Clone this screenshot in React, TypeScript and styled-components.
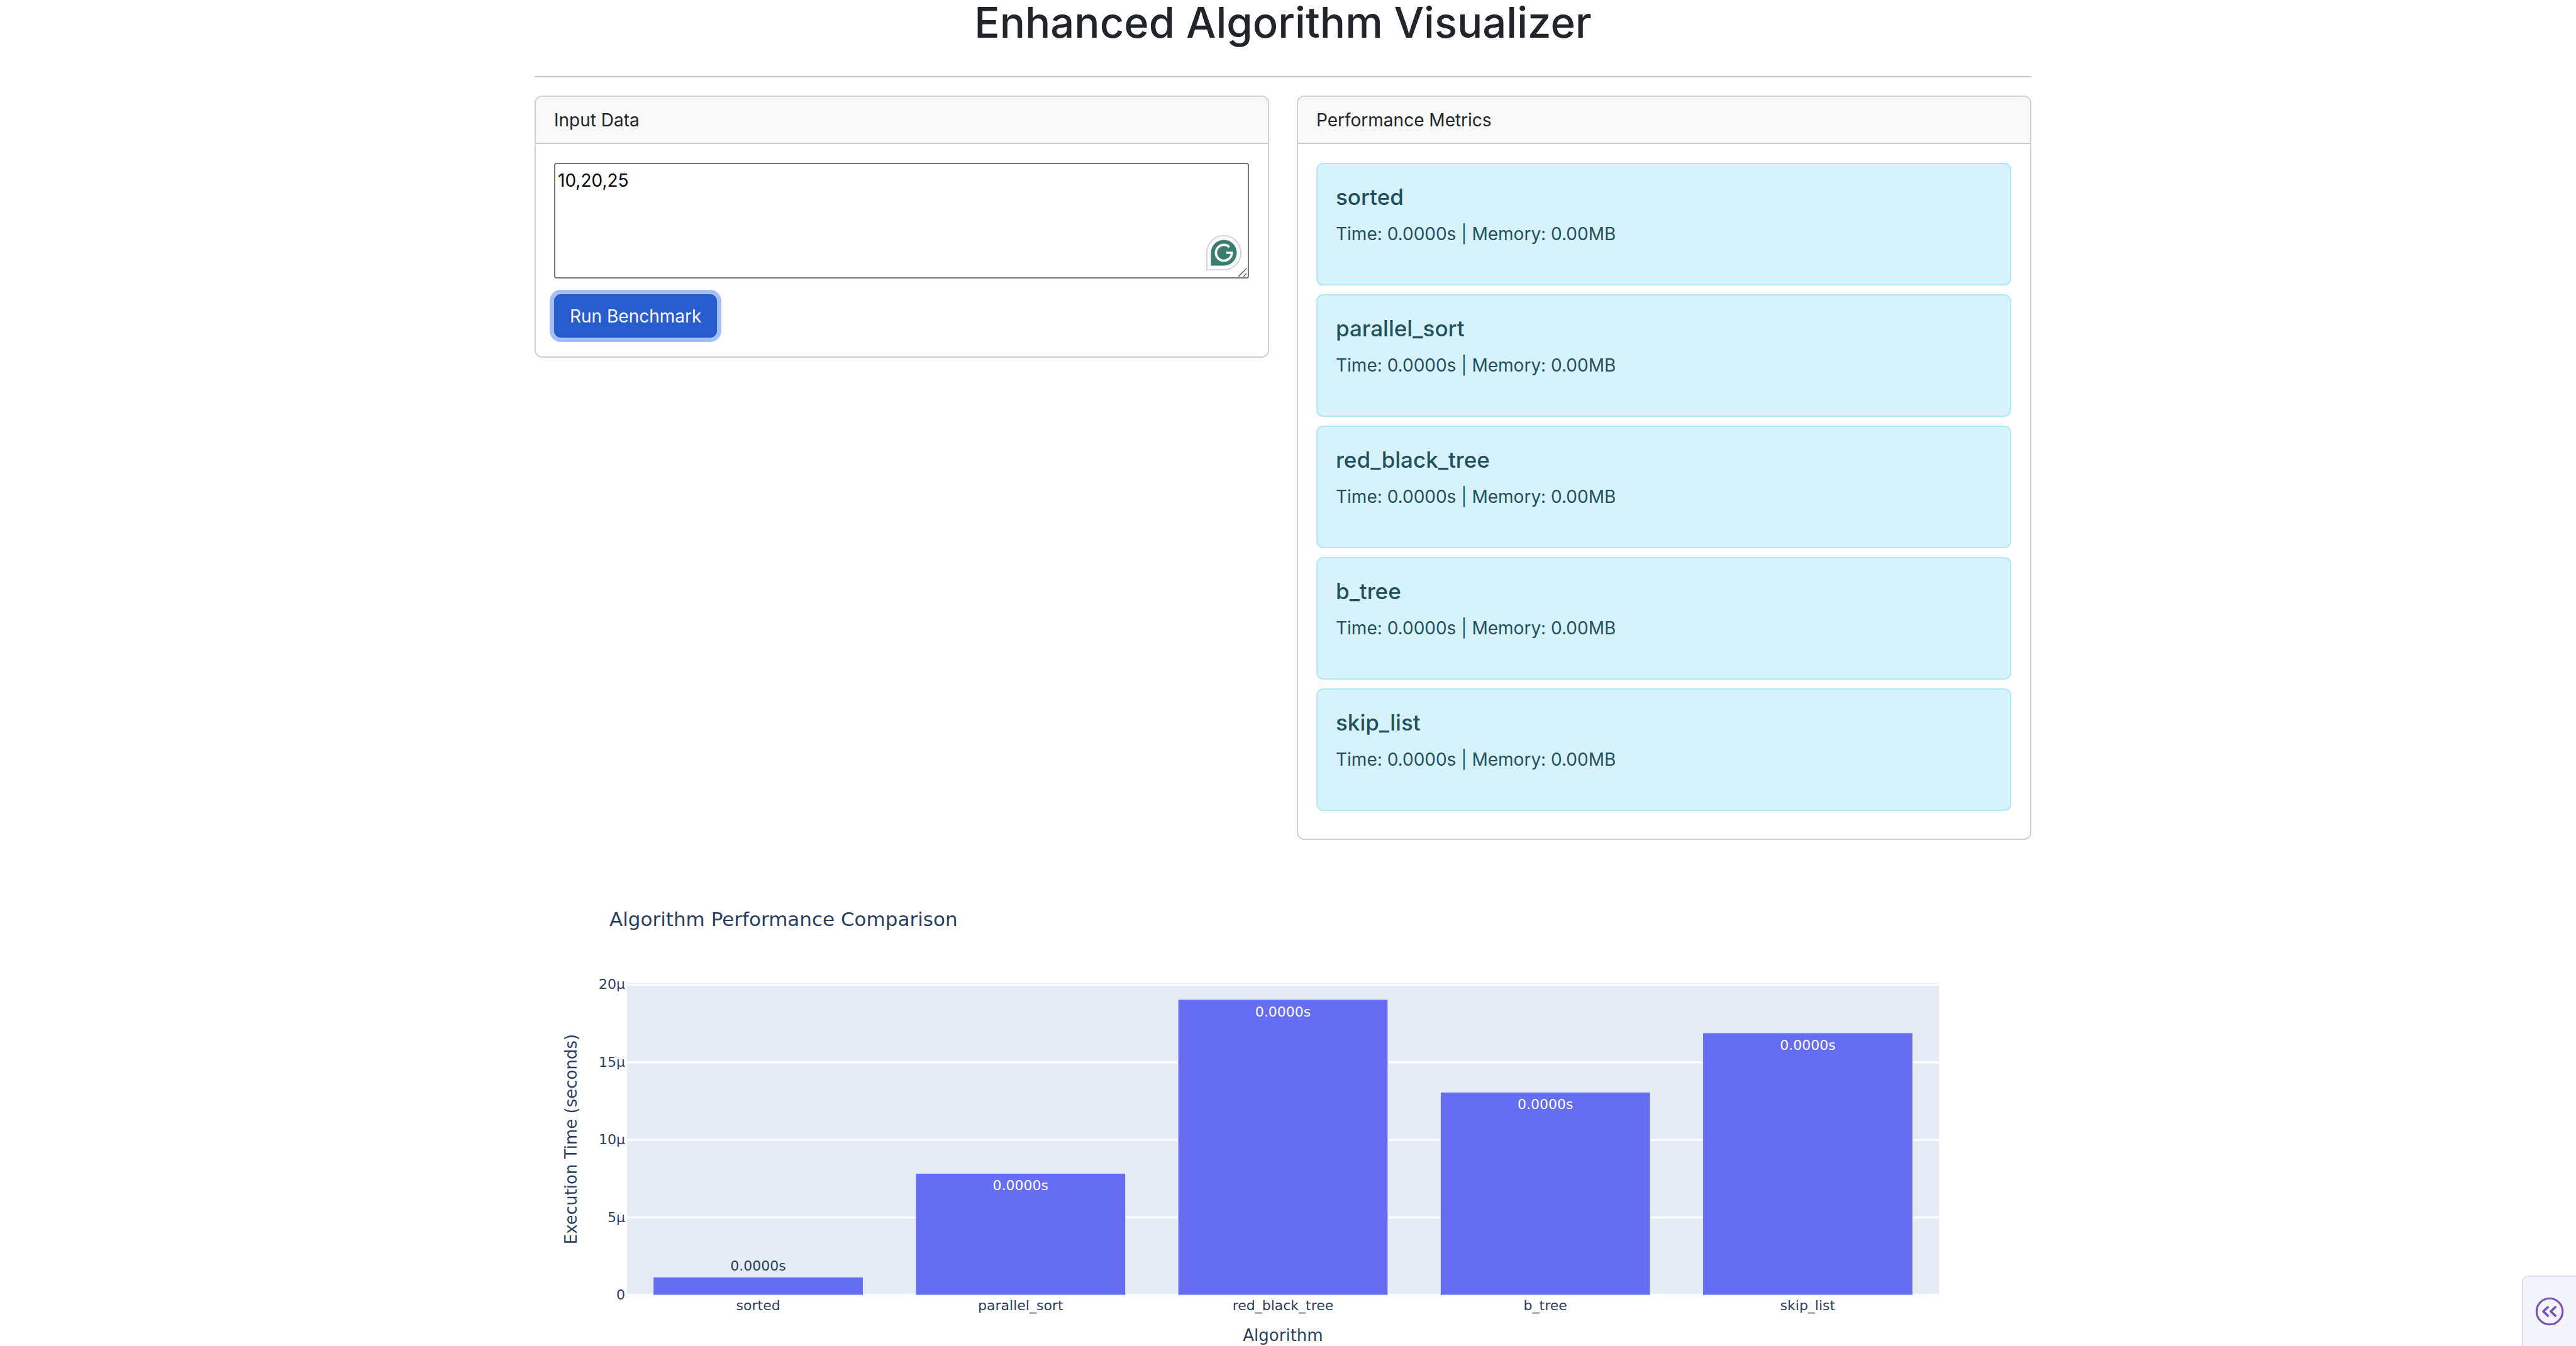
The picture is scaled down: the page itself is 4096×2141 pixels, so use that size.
import React, { useState } from "react";
import styled, { createGlobalStyle } from "styled-components";

const GlobalStyle = createGlobalStyle`
  *, *::before, *::after { box-sizing: border-box; }
  html, body { margin: 0; background: #fff; }
  body {
    color: #212529;
    font-family: Inter, "Liberation Sans", sans-serif;
    font-size: 28px;
    line-height: 44px;
    overflow: hidden;
  }
`;

const Page = styled.main`
  display: flex;
  justify-content: center;
  padding: 0 16px 0 0;
`;

const Container = styled.div`
  width: 100%;
  max-width: 2380px;
`;

const Title = styled.h1`
  margin: 0;
  font-size: 67px;
  line-height: 72px;
  font-weight: 500;
  text-align: center;
`;

const Divider = styled.hr`
  margin: 49px 0 29px;
  border: 0;
  border-top: 2px solid #c8c9ca;
`;

const Columns = styled.div`
  display: grid;
  grid-template-columns: 1fr 1fr;
  align-items: start;
  gap: 44px;
`;

const Card = styled.section`
  border: 2px solid #d0d1d2;
  border-radius: 12px;
  background: #fff;
  overflow: hidden;
`;

const CardHeader = styled.header`
  padding: 16px 29px 14px;
  line-height: 43px;
  background: #f8f8f8;
  border-bottom: 2px solid #cbcccc;
`;

const CardBody = styled.div`
  padding: 30px 30px 30px 29px;
`;

const EditorWrap = styled.div`
  position: relative;
  margin-bottom: 25px;
`;

const DataInput = styled.textarea`
  display: block;
  width: 100%;
  height: 184px;
  margin: 0;
  padding: 4px;
  border: 2px solid #767676;
  border-radius: 4px;
  background: #fff;
  color: #000;
  font: inherit;
  resize: none;
  outline: none;
`;

const AssistantBadge = styled.svg`
  position: absolute;
  right: 12px;
  bottom: 13px;
  width: 56px;
  height: 56px;
`;

const ResizeGrip = styled.svg`
  position: absolute;
  right: 3px;
  bottom: 3px;
  width: 14px;
  height: 14px;
`;

const RunButton = styled.button`
  display: block;
  margin: 0;
  padding: 12px 23px 10px;
  border: 2px solid #2757c5;
  border-radius: 11px;
  background: #295ccf;
  box-shadow: 0 0 0 7px #a3bff9;
  color: #fff;
  font: inherit;
  line-height: 43px;
  cursor: pointer;
`;

const Alert = styled.article`
  margin-bottom: 14px;
  padding: 30px 29px 29px;
  border: 2px solid #afe8f8;
  border-radius: 11px;
  background: #d6f3fb;
  color: #23505f;
`;

const AlertTitle = styled.h5`
  margin: 0 0 15px;
  font-size: 35px;
  line-height: 44px;
  font-weight: 500;
`;

const AlertText = styled.p`
  margin: 0 0 29px;
`;

const Chart = styled.svg`
  display: block;
  width: 100%;
  margin-top: 44px;
  font-family: "DejaVu Sans", sans-serif;
  font-size: 22px;
  fill: #2a3f5f;
`;

const ChartTitle = styled.text`
  font-size: 31px;
`;

const AxisTitle = styled.text`
  font-size: 26px;
  text-anchor: middle;
`;

const BarLabel = styled.text<{ $inside: boolean }>`
  text-anchor: middle;
  fill: ${(p) => (p.$inside ? "#fff" : "#2a3f5f")};
`;

const SideToggle = styled.button`
  position: fixed;
  right: 0;
  bottom: 0;
  display: flex;
  align-items: center;
  justify-content: center;
  width: 86px;
  height: 112px;
  padding: 0;
  border: solid #dcdeeb;
  border-width: 2px 0 0 2px;
  border-radius: 10px 0 0 0;
  background: #f4f5fa;
  cursor: pointer;
`;

const results = [
  { name: "sorted", micros: 1.16 },
  { name: "parallel_sort", micros: 7.85 },
  { name: "red_black_tree", micros: 19.06 },
  { name: "b_tree", micros: 13.08 },
  { name: "skip_list", micros: 16.9 },
];

const seconds = (micros: number) => (micros / 1e6).toFixed(4) + "s";

const plot = { left: 147, right: 2233, top: 184, zero: 680 };
const unit = 123.4 / 5;
const band = (plot.right - plot.left) / results.length;

function PerformanceChart() {
  return (
    <Chart viewBox="0 0 2380 761" role="img" aria-label="Algorithm Performance Comparison">
      <ChartTitle x={119} y={93}>Algorithm Performance Comparison</ChartTitle>
      <rect
        x={plot.left}
        y={plot.top}
        width={plot.right - plot.left}
        height={plot.zero - plot.top}
        fill="#e5ecf6"
      />
      {[0, 5, 10, 15, 20].map((tick) => {
        const y = plot.zero - tick * unit;
        return (
          <g key={tick}>
            <line
              x1={plot.left}
              x2={plot.right}
              y1={y}
              y2={y}
              stroke="#fff"
              strokeWidth={tick === 0 ? 4 : 3}
            />
            <text x={plot.left - 3} y={y + 7} textAnchor="end">
              {tick === 0 ? "0" : tick + "µ"}
            </text>
          </g>
        );
      })}
      {results.map(({ name, micros }, i) => {
        const height = micros * unit;
        const center = plot.left + band * (i + 0.5);
        const top = plot.zero - height;
        const inside = height > 40;
        return (
          <g key={name}>
            <rect
              x={center - band * 0.4}
              y={top}
              width={band * 0.8}
              height={height}
              fill="#656ef2"
              stroke="#e5ecf6"
              strokeWidth={1}
            />
            <BarLabel $inside={inside} x={center} y={inside ? top + 27 : top - 10}>
              {seconds(micros)}
            </BarLabel>
            <text x={center} y={704} textAnchor="middle">{name}</text>
          </g>
        );
      })}
      <AxisTitle x={(plot.left + plot.right) / 2} y={753}>Algorithm</AxisTitle>
      <AxisTitle transform="translate(67 432) rotate(-90)">Execution Time (seconds)</AxisTitle>
    </Chart>
  );
}

export default function App() {
  const [data, setData] = useState("10,20,25");
  return (
    <>
      <GlobalStyle />
      <Page>
        <Container>
          <Title>Enhanced Algorithm Visualizer</Title>
          <Divider />
          <Columns>
            <Card>
              <CardHeader>
                <label htmlFor="input-data">Input Data</label>
              </CardHeader>
              <CardBody>
                <EditorWrap>
                  <DataInput
                    id="input-data"
                    spellCheck={false}
                    value={data}
                    onChange={(e) => setData(e.target.value)}
                  />
                  <AssistantBadge viewBox="0 0 60 60" aria-hidden="true">
                    <path
                      d="M1 59V30A29 29 0 1 1 30 59Z"
                      fill="#fff"
                      stroke="#cdd0e0"
                      strokeWidth="2"
                    />
                    <path d="M8 52V30A22 22 0 1 1 30 52Z" fill="#387d6e" />
                    <path
                      d="M39.5 20.5A13.5 13.5 0 1 0 43.5 30H34"
                      fill="none"
                      stroke="#fff"
                      strokeWidth="4"
                    />
                  </AssistantBadge>
                  <ResizeGrip viewBox="0 0 14 14" aria-hidden="true">
                    <path d="M0 14L13 1M8 14L13 9" stroke="#666" strokeWidth="1.6" />
                  </ResizeGrip>
                </EditorWrap>
                <RunButton type="button">Run Benchmark</RunButton>
              </CardBody>
            </Card>
            <Card>
              <CardHeader>Performance Metrics</CardHeader>
              <CardBody>
                {results.map(({ name, micros }) => (
                  <Alert key={name}>
                    <AlertTitle>{name}</AlertTitle>
                    <AlertText>Time: {seconds(micros)} | Memory: 0.00MB</AlertText>
                  </Alert>
                ))}
              </CardBody>
            </Card>
          </Columns>
          <PerformanceChart />
        </Container>
      </Page>
      <SideToggle type="button" aria-label="Open side panel">
        <svg width="46" height="46" viewBox="0 0 50 50" fill="none" stroke="#7a4fc0" aria-hidden="true">
          <circle cx="25" cy="25" r="22.5" strokeWidth="3.4" />
          <path
            d="M22 17.5L14 25L22 32.5M35 17.5L27 25L35 32.5"
            strokeWidth="4"
            strokeLinecap="round"
            strokeLinejoin="round"
          />
        </svg>
      </SideToggle>
    </>
  );
}
